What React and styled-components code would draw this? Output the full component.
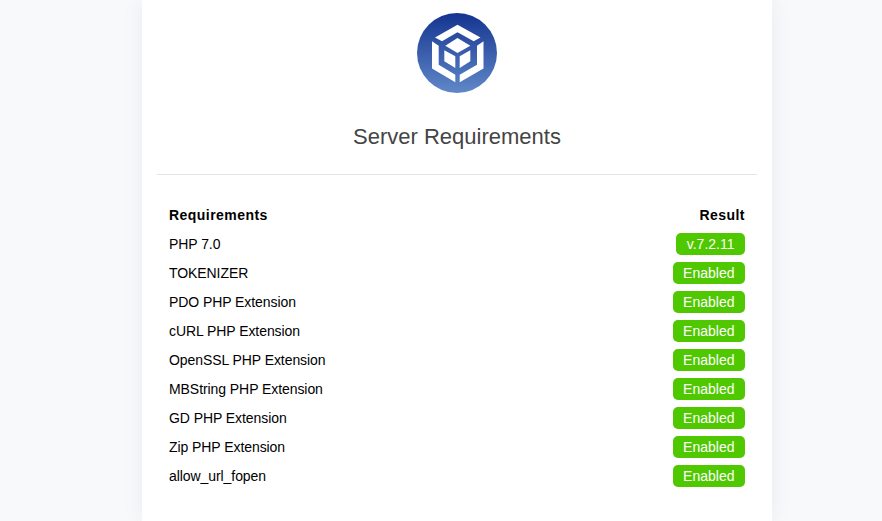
import React from "react";
import styled, { createGlobalStyle } from "styled-components";

const rows = [
  { name: "PHP 7.0", value: "v.7.2.11" },
  { name: "TOKENIZER", value: "Enabled" },
  { name: "PDO PHP Extension", value: "Enabled" },
  { name: "cURL PHP Extension", value: "Enabled" },
  { name: "OpenSSL PHP Extension", value: "Enabled" },
  { name: "MBString PHP Extension", value: "Enabled" },
  { name: "GD PHP Extension", value: "Enabled" },
  { name: "Zip PHP Extension", value: "Enabled" },
  { name: "allow_url_fopen", value: "Enabled" },
];

const Logo = () => (
  <LogoSvg viewBox="0 0 80 80">
    <defs>
      <linearGradient id="logoFill" x1="0" y1="0" x2="0" y2="1">
        <stop offset="0" stopColor="#143490" />
        <stop offset="1" stopColor="#6088c8" />
      </linearGradient>
    </defs>
    <circle cx="40" cy="40" r="40" fill="url(#logoFill)" />
    <g fill="#fff">
      <polygon points="40.5,11.7 63.5,24.5 56.7,28.3 40.5,19.3 25,28.3 18,24.5" />
      <polygon points="15,28.3 21.7,32.7 21.7,51.7 38.3,61.7 38.3,69.3 15,55.5" />
      <polygon points="66.5,28.3 66.5,55.5 42.7,69.3 42.7,61.7 60,51.7 60,32.7" />
      <polygon points="40.5,25 53.3,32.7 40.5,40 28.3,32.7" />
      <polygon points="27.3,37.3 38.3,43.3 38.3,55 27.3,48.3" />
      <polygon points="53.3,37.3 42.7,43.3 42.7,55 53.3,48.3" />
    </g>
  </LogoSvg>
);

const App = () => (
  <>
    <GlobalStyle />
    <Page>
      <Card>
        <Brand>
          <Logo />
        </Brand>
        <Title>Server Requirements</Title>
        <Divider />
        <Table>
          <HeadRow>
            <span>Requirements</span>
            <span>Result</span>
          </HeadRow>
          {rows.map((row) => (
            <Row key={row.name}>
              <span>{row.name}</span>
              <Badge>{row.value}</Badge>
            </Row>
          ))}
        </Table>
      </Card>
    </Page>
  </>
);

const GlobalStyle = createGlobalStyle`
  html, body {
    margin: 0;
    height: 100%;
    overflow: hidden;
    background: #f8f9fb;
    font-family: "Liberation Sans", Arial, sans-serif;
  }
`;

const Page = styled.div`
  display: flex;
  justify-content: flex-start;
  padding-left: 142px;
  height: 521px;
  overflow: hidden;
`;

const Card = styled.main`
  width: 630px;
  height: 521px;
  box-sizing: border-box;
  padding: 13px 15px 0;
  background: #fff;
  box-shadow: 0 0 20px rgba(50, 60, 90, 0.07);
`;

const Brand = styled.div`
  display: flex;
  justify-content: center;
`;

const LogoSvg = styled.svg`
  display: block;
  width: 80px;
  height: 80px;
`;

const Title = styled.h1`
  margin: 31px 0 0;
  font-size: 22px;
  line-height: 26px;
  font-weight: 400;
  text-align: center;
  color: #444;
`;

const Divider = styled.hr`
  margin: 24px 0 0;
  border: 0;
  border-top: 1px solid #e5e5e5;
`;

const Table = styled.div`
  padding: 25px 12px 0;
  font-size: 14px;
  letter-spacing: -0.07px;
  color: #000;
`;

const Row = styled.div`
  display: flex;
  justify-content: space-between;
  align-items: center;
  height: 29px;
`;

const HeadRow = styled(Row)`
  font-weight: 700;
  letter-spacing: 0.45px;
`;

const Badge = styled.span`
  display: block;
  padding: 0 10.5px;
  height: 22px;
  line-height: 22px;
  border-radius: 5px;
  background: #4fc800;
  color: #fff;
  letter-spacing: 0;
`;

export default App;
